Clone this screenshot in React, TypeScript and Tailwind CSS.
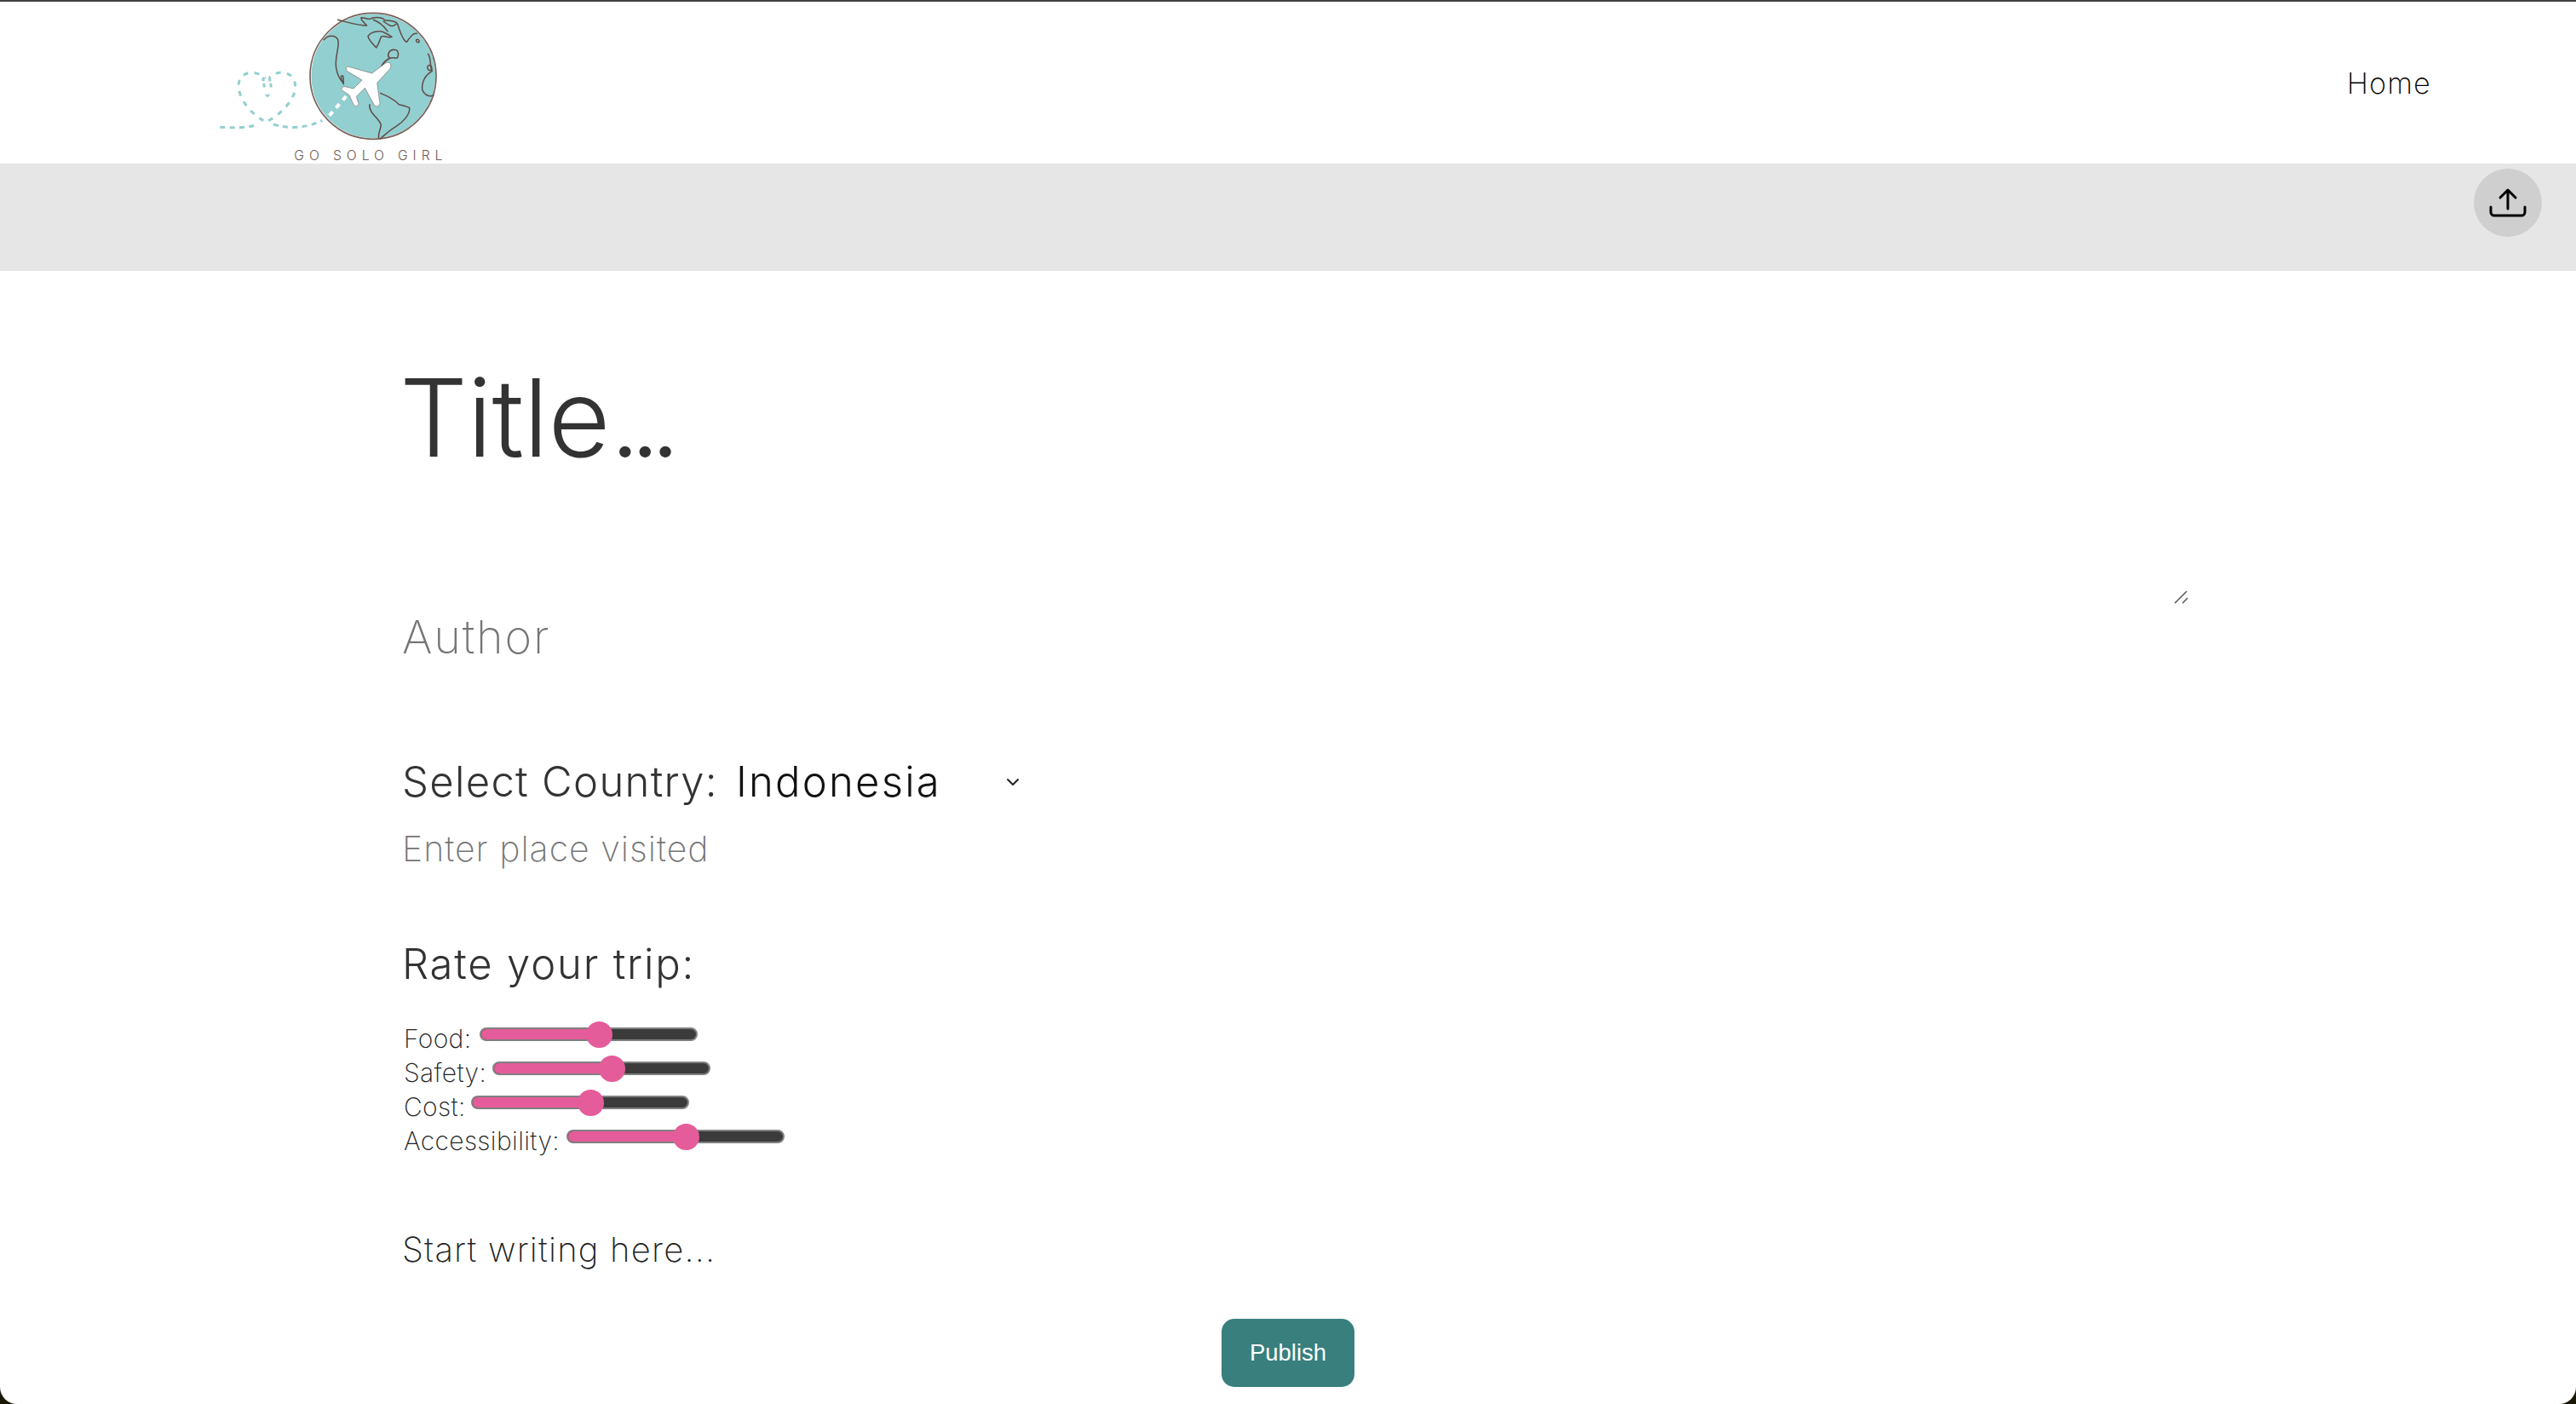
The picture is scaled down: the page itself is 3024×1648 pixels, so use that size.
import { ChevronDown } from "lucide-react";

const sans = "font-['Inter','Open_Sans',sans-serif] font-light";

const ratings = [
  { label: "Food:", labelClass: "w-[89px] -mt-[2px]" },
  { label: "Safety:", labelClass: "w-[104px] -mt-[2px]" },
  { label: "Cost:", labelClass: "w-[79px] -mt-[2px]" },
  { label: "Accessibility:", labelClass: "w-[191px] -mt-[2px]" },
];

const Logo = () => (
  <svg viewBox="0 0 1020 600" className="w-[340px] h-[200px] shrink-0 -mt-0.5" fill="none">
    <circle cx="650" cy="268" r="220" fill="#92d0d1" />
    <circle cx="656" cy="268" r="219" fill="#92cfd0" />
    <circle cx="655" cy="268" r="222" stroke="#fff" strokeWidth="7" />
    <circle cx="654" cy="268" r="222" stroke="#7a5f58" strokeWidth="5" />
    <g stroke="#5f4b46" strokeWidth="4.5" strokeLinejoin="round" strokeLinecap="round">
      <path d="M530,70 C565,78 600,90 632,90 C620,78 610,70 612,62 C630,62 640,72 650,64 C665,60 690,60 695,72 C715,70 738,78 740,85 C748,110 760,145 772,148 C785,130 795,115 808,118" />
      <path d="M665,168 C655,155 640,145 636,128 C645,112 670,108 688,112 C700,118 710,122 720,130 C705,135 690,122 682,130 C678,142 672,158 665,168 Z" />
      <path d="M655,70 C670,75 690,90 705,110 M690,75 C705,85 720,100 735,85" />
      <path d="M806,140 C812,136 818,142 816,148 C810,152 804,146 806,140 Z" />
      <path d="M480,140 C495,122 522,122 530,140 C538,165 515,205 525,245 C530,270 542,285 548,292 C538,275 540,262 548,268 C552,280 548,290 550,296" />
      <path d="M740,180 C745,190 742,205 735,205 C715,198 695,210 682,236 C690,222 700,212 712,205 C702,195 708,178 725,175 C732,175 738,176 740,180 Z" />
      <path d="M680,328 C705,338 730,352 745,368 C760,372 772,374 782,380 C785,402 760,430 735,445 C712,458 692,478 680,488" />
      <path d="M642,368 C636,395 678,420 682,440 C680,458 670,472 674,486" />
      <path d="M848,190 C860,210 852,232 862,250 C842,262 825,280 827,315 C834,335 852,342 866,336" />
      <path d="M845,235 C855,222 862,235 860,245 C852,252 845,245 845,235 Z" />
    </g>
    <path
      d="M712,222 C720,228 718,240 705,252 L668,292 L678,365 C675,375 665,378 658,370 L625,310 L595,340 L603,365 C600,378 590,375 585,368 L570,335 L545,318 C540,310 545,305 555,305 L585,312 L615,282 L562,250 C555,240 560,232 572,236 L650,258 L690,228 C700,220 708,218 712,222 Z"
      fill="#fff"
      stroke="#5f4b46"
      strokeWidth="1.5"
    />
    <path d="M500,407 L560,338" stroke="#fff" strokeWidth="12" strokeDasharray="18 18" />
    <g stroke="#92cfd0" strokeWidth="9" strokeLinecap="butt">
      <path d="M115,448 C160,450 205,452 250,438" strokeDasharray="18 16" />
      <path d="M303,438 C345,452 415,455 475,424" strokeDasharray="18 16" />
      <path d="M268,425 C225,400 180,350 180,300 C180,258 232,238 275,275" strokeDasharray="18 22" />
      <path d="M285,425 C330,402 380,350 380,305 C380,255 325,238 288,274" strokeDasharray="18 22" />
      <path d="M268,272 C264,285 272,295 270,308 M290,272 C288,285 296,295 294,308" strokeDasharray="14 8" />
    </g>
    <path d="M272,332 L292,332 L282,344 Z" fill="#92cfd0" />
    <text
      x="376"
      y="565"
      fontFamily="Inter, sans-serif"
      fontWeight="300"
      fontSize="47"
      fill="#6f5a54"
      textLength="522"
      lengthAdjust="spacing"
    >
      GO SOLO GIRL
    </text>
  </svg>
);

const UploadIcon = () => (
  <svg viewBox="0 0 48 48" className="size-12" fill="none" stroke="currentColor" strokeWidth="3" strokeLinecap="round" strokeLinejoin="round">
    <path d="M4 29v6a4 4 0 0 0 4 4h32a4 4 0 0 0 4-4v-6" />
    <path d="M24 31V10M15 18l9-9 9 9" />
  </svg>
);

const Slider = () => (
  <div className="relative w-[256px] h-4 rounded-full bg-[#3b3b3b] border-2 border-[#808080] -mt-3">
    <div className="h-full w-[140px] rounded-l-full bg-[#e55c9a]" />
    <div className="absolute left-[123px] top-[-9.5px] size-[31px] rounded-full bg-[#e55c9a]" />
  </div>
);

export default function App() {
  return (
    <div className="h-screen bg-[#1c1808] overflow-hidden">
      <div className={`h-full flex flex-col bg-white rounded-b-[20px] border-t-2 border-[#3f3f3f] ${sans}`}>
        <header className="h-[190px] flex items-start justify-between pl-[220px] pr-[170px]">
          <Logo />
          <a className="mt-[74px] text-[34px] leading-[44px] text-black tracking-[1.2px] font-extralight">Home</a>
        </header>

        <div className="relative h-[126px] bg-[#e6e6e6] flex justify-end pt-1.5 pr-10">
          <button className="size-20 rounded-full bg-[#cfcfcf] flex items-center justify-center text-black">
            <UploadIcon />
          </button>
        </div>

        <main className="flex-1 flex flex-col pl-[472px]">
          <div className="relative mt-[92px] w-[2098px] h-[302px]">
            <textarea aria-label="Title" className="w-full h-full text-[126px] leading-[160px] text-[#333] outline-none resize-none" />
            <span className="absolute left-[-3px] top-0 pointer-events-none text-[126px] leading-[160px] tracking-[-0.5px] font-[260] text-[#333]">
              Title<span className="tracking-[-12px]">...</span>
            </span>
            <svg viewBox="0 0 18 18" className="absolute right-0 bottom-[2px] size-[18px]" stroke="#555" strokeWidth="1.5">
              <path d="M1 16 15 2M10 16l6-6" />
            </svg>
          </div>
          <input
            placeholder="Author"
            className="mt-[6px] w-[800px] h-[60px] text-[54px] leading-[60px] tracking-[1.8px] font-extralight text-[#757575] placeholder:text-[#757575] outline-none"
          />

          <div className="mt-[108px] flex items-center h-[64px]">
            <label className="text-[49px] leading-[64px] tracking-[1.3px] text-[#333] w-[392px] shrink-0">Select Country:</label>
            <div className="relative w-[341px]">
              <select className="w-full appearance-none bg-transparent text-[49px] leading-[64px] tracking-[2.2px] text-[#111] outline-none font-light">
                <option>Indonesia</option>
              </select>
              <ChevronDown size={24} strokeWidth={2} className="absolute right-[4px] top-[20px] text-[#222]" />
            </div>
          </div>

          <input
            placeholder="Enter place visited"
            className="mt-[16px] w-[800px] h-[60px] text-[41px] leading-[60px] tracking-[1px] font-extralight text-[#757575] placeholder:text-[#757575] outline-none"
          />

          <h2 className="mt-[74px] text-[49px] leading-[64px] tracking-[1.8px] font-light text-[#333]">Rate your trip:</h2>

          <div className="mt-[36px] flex flex-col pl-[2px]">
            {ratings.map((r) => (
              <div key={r.label} className="flex items-center h-10 text-[#222] text-[30px] leading-10 tracking-[0.35px] font-extralight">
                <span className={r.labelClass}>{r.label}</span>
                <Slider />
              </div>
            ))}
          </div>

          <textarea
            placeholder="Start writing here..."
            className="mt-[77px] w-[2098px] h-[60px] text-[40px] leading-[60px] tracking-[1.2px] font-[250] text-[#222] placeholder:text-[#222] outline-none resize-none"
          />

          <button className="mt-[51px] -ml-[472px] self-center w-[156px] h-20 rounded-[15px] bg-[#387f7e] text-white text-[27.5px] font-normal font-['Liberation_Sans',sans-serif]">
            Publish
          </button>
        </main>
      </div>
    </div>
  );
}
